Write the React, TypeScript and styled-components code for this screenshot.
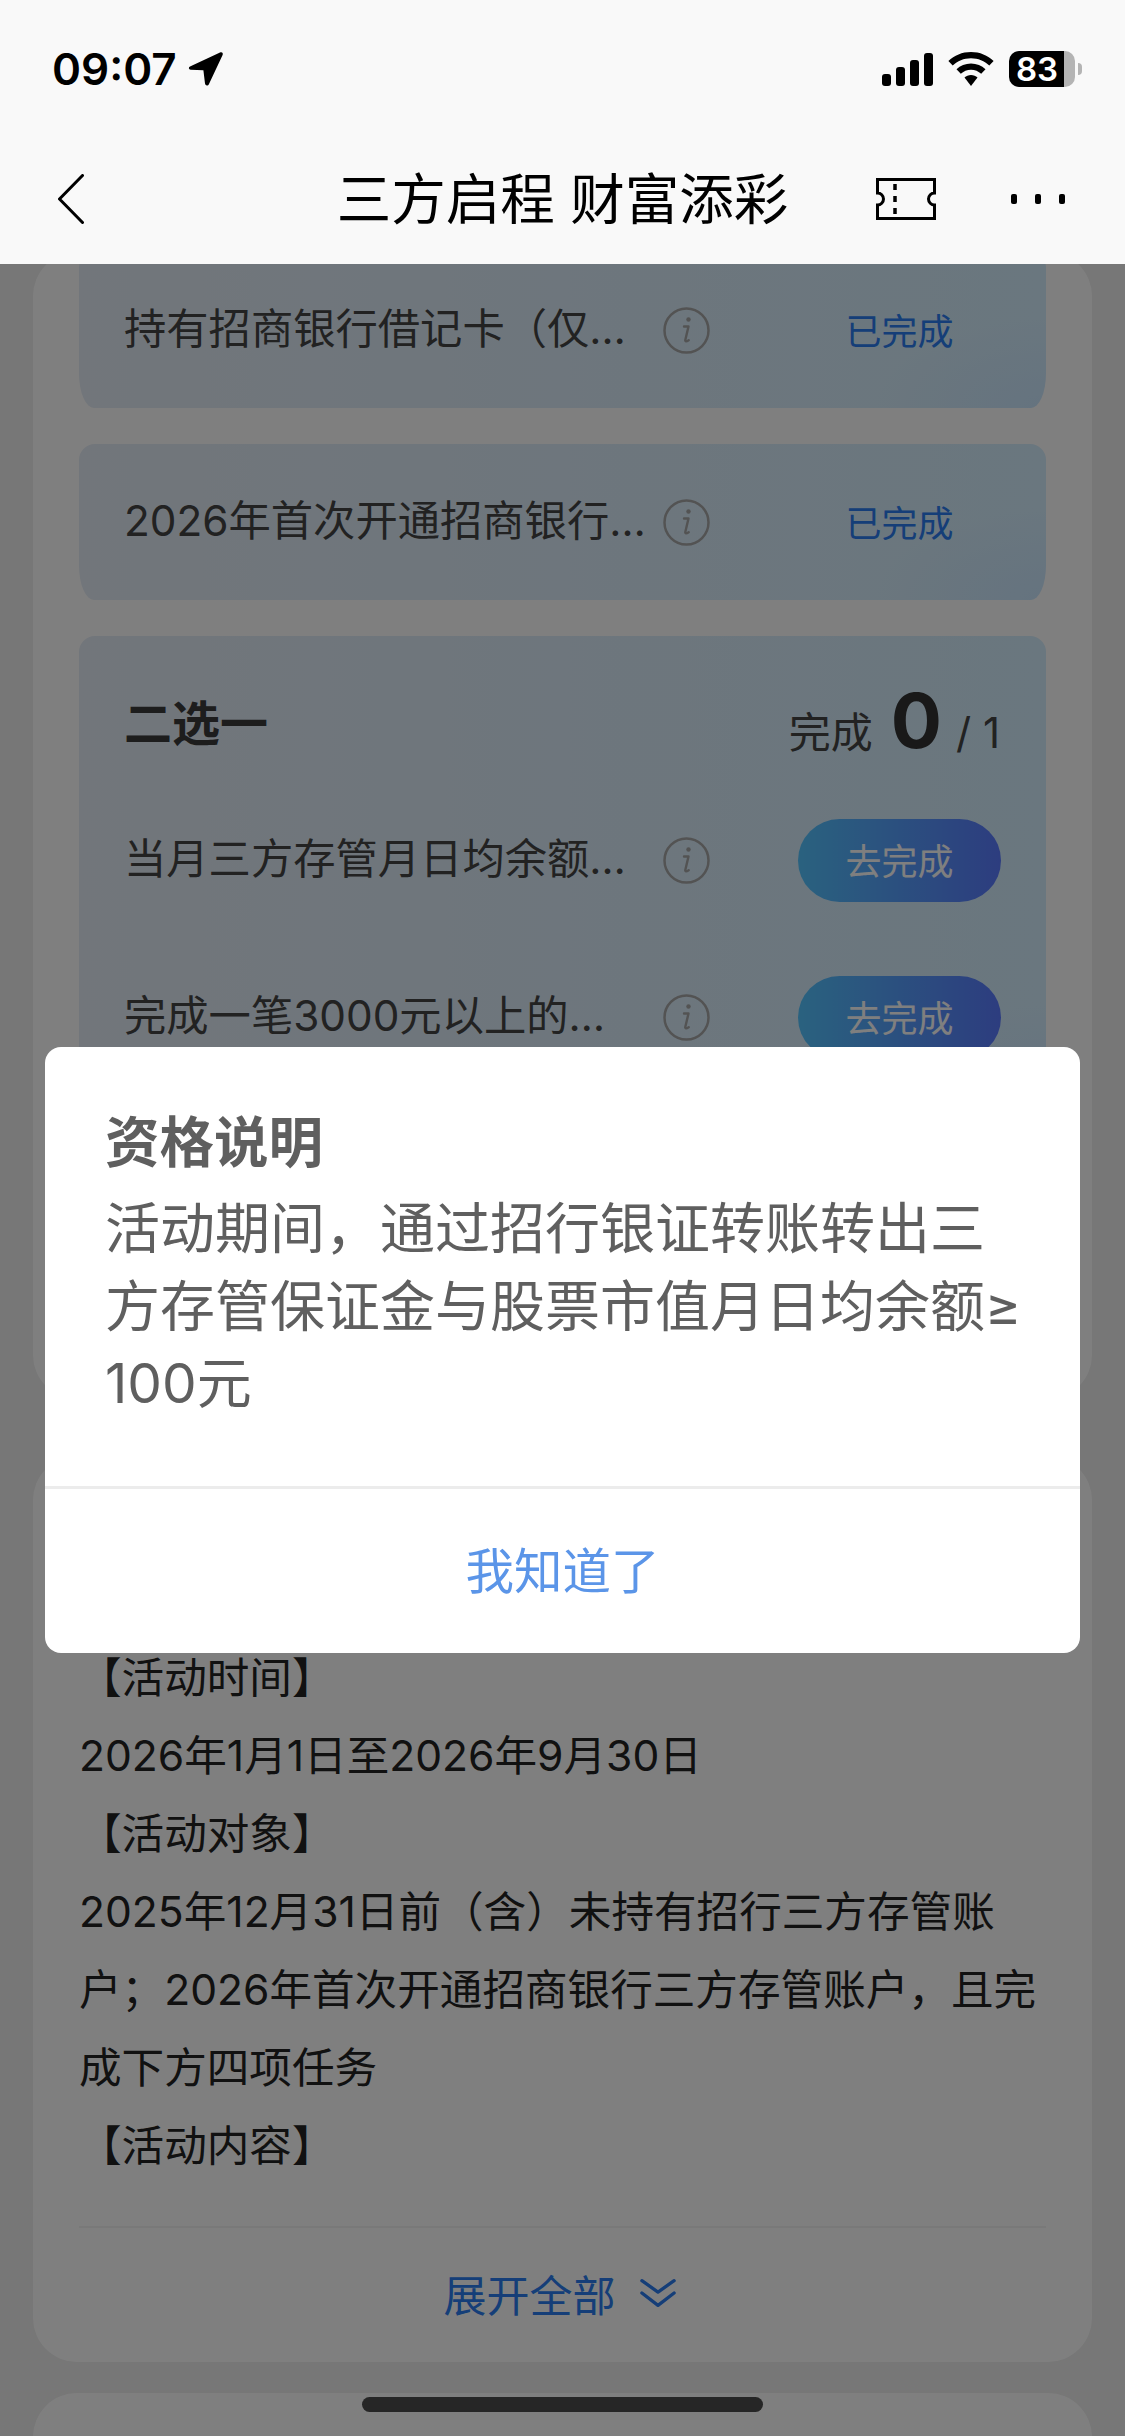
import React from "react";
import styled, { createGlobalStyle } from "styled-components";

const FONT = `"Inter", "Noto Sans CJK SC", "Noto Sans", sans-serif`;

const GlobalStyle = createGlobalStyle`
  html, body {
    margin: 0;
    padding: 0;
    background: #eeeeee;
    font-family: ${FONT};
  }
  * {
    box-sizing: border-box;
  }
`;

const Screen = styled.div`
  position: relative;
  width: 1125px;
  height: 2436px;
  overflow: hidden;
  display: flex;
  flex-direction: column;
  background: #eeeeee;
`;

const Header = styled.header`
  position: relative;
  z-index: 3;
  flex: none;
  height: 264px;
  background: #f9f9f9;
  display: flex;
  flex-direction: column;
`;

const StatusBar = styled.div`
  height: 134px;
  padding: 46px 50px 0 52px;
  display: flex;
  justify-content: space-between;
  align-items: flex-start;
`;

const Clock = styled.div`
  display: flex;
  align-items: center;
  gap: 11px;
  height: 46px;
  font-size: 44px;
  font-weight: 600;
  color: #000;
`;

const StatusIcons = styled.div`
  display: flex;
  align-items: center;
  height: 46px;
  gap: 15px;
`;

const Battery = styled.div`
  position: relative;
  width: 66px;
  height: 36px;
  border-radius: 10px;
  background: linear-gradient(90deg, #000 83%, #b4b4b4 83%);
  color: #fff;
  font-size: 33px;
  font-weight: 600;
  line-height: 36px;
  padding-left: 7px;
  &::after {
    content: "";
    position: absolute;
    right: -7px;
    top: 12px;
    width: 4px;
    height: 12px;
    border-radius: 0 6px 6px 0;
    background: #b4b4b4;
  }
`;

const NavBar = styled.nav`
  position: relative;
  flex: 1;
  display: flex;
  align-items: center;
  justify-content: space-between;
  padding: 0 60px 0 58px;
`;

const NavTitle = styled.h1`
  position: absolute;
  left: 0;
  right: 0;
  top: 31px;
  margin: 0;
  text-align: center;
  font-size: 54.5px;
  line-height: 68px;
  font-weight: 400;
  color: #000;
`;

const NavActions = styled.div`
  display: flex;
  align-items: center;
  gap: 75px;
`;

const Scroller = styled.main`
  flex: 1;
  overflow: hidden;
  padding: 0 33px;
  display: flex;
  flex-direction: column;
  gap: 31px;
`;

const Panel = styled.section<{ $top?: number; $height: number }>`
  flex: none;
  height: ${(p) => p.$height}px;
  margin-top: ${(p) => p.$top ?? 0}px;
  padding: 0 46px;
  background: #ffffff;
  border-radius: 44px;
  display: flex;
  flex-direction: column;
`;

const TaskCard = styled.div<{ $grow?: boolean }>`
  flex: none;
  height: ${(p) => (p.$grow ? "auto" : "156px")};
  margin-bottom: 36px;
  padding: 0 45px;
  border-radius: 16px 16px 15px 15px / 16px 16px 35px 35px;
  background:
    radial-gradient(170px 90px at 100% 100%, rgba(196, 226, 255, 0.6), rgba(196, 226, 255, 0) 100%),
    linear-gradient(90deg, #e4ecf6 0%, #d4eefe 100%);
  display: flex;
  flex-direction: column;
  justify-content: center;
`;

const GroupHead = styled.div`
  height: 146px;
  padding: 21px 1px 0 0;
  display: flex;
  justify-content: space-between;
  align-items: center;
`;

const GroupTitle = styled.div`
  font-size: 48px;
  font-weight: 700;
  color: #3a3a3a;
`;

const Progress = styled.div`
  display: flex;
  align-items: baseline;
  font-size: 42px;
  color: #444444;
`;

const ProgressValue = styled.span`
  font-size: 76px;
  font-weight: 700;
  color: #333333;
  margin: 0 14px 0 18px;
`;

const TaskRow = styled.div<{ $tall?: boolean }>`
  height: ${(p) => (p.$tall ? "157px" : "auto")};
  display: flex;
  align-items: center;
`;

const TaskName = styled.div`
  width: 516px;
  padding-bottom: 3px;
  font-size: 42.3px;
  line-height: 56px;
  white-space: nowrap;
  color: #444444;
`;

const InfoSlot = styled.div`
  width: 47px;
  height: 47px;
  margin-left: 23px;
  flex: none;
`;

const DoneLabel = styled.div`
  width: 203px;
  padding-bottom: 3px;
  text-align: center;
  margin-left: 88px;
  font-size: 36px;
  color: #2a7cf0;
`;

const GoButton = styled.div`
  width: 203px;
  height: 83px;
  padding-bottom: 3px;
  margin-left: 88px;
  border-radius: 42px;
  background: linear-gradient(90deg, #54c4ff 0%, #5a7aff 100%);
  color: #ffffff;
  font-size: 36px;
  display: flex;
  align-items: center;
  justify-content: center;
`;

const RulesBody = styled.div`
  padding-top: 183px;
  font-size: 42.6px;
  line-height: 78px;
  color: #222222;
`;

const RulesFooter = styled.div`
  margin-top: 41px;
  height: 136px;
  padding: 0 6px 5px 0;
  border-top: 2px solid #f3f3f3;
  display: flex;
  align-items: center;
  justify-content: center;
  gap: 24px;
  font-size: 43px;
  color: #2a7cf0;
`;

const Scrim = styled.div`
  position: absolute;
  inset: 0;
  z-index: 1;
  background: rgba(0, 0, 0, 0.5);
`;

const Dialog = styled.div`
  position: absolute;
  z-index: 2;
  left: 45px;
  top: 1047px;
  width: 1035px;
  height: 606px;
  border-radius: 16px;
  background: #ffffff;
  display: flex;
  flex-direction: column;
`;

const DialogContent = styled.div`
  flex: 1;
  padding: 56px 50px 0 60px;
  color: #5f5f5f;
`;

const DialogTitle = styled.div`
  font-size: 54.5px;
  line-height: 78px;
  font-weight: 700;
`;

const DialogText = styled.div`
  margin-top: 9px;
  font-size: 55px;
  line-height: 77.5px;
`;

const DialogButton = styled.div`
  height: 167px;
  padding-bottom: 6px;
  border-top: 3px solid #ececec;
  display: flex;
  align-items: center;
  justify-content: center;
  font-size: 48.5px;
  color: #5b95e8;
`;

const HomeBar = styled.div`
  position: absolute;
  z-index: 3;
  left: 362px;
  bottom: 24px;
  width: 401px;
  height: 15px;
  border-radius: 8px;
  background: #262626;
`;

const InfoIcon = () => (
  <svg width="47" height="47" viewBox="0 0 47 47" fill="none">
    <circle cx="23.5" cy="23.5" r="22" stroke="#a6a6a6" strokeWidth="2.5" />
    <circle cx="25.5" cy="12.5" r="2.2" fill="#a6a6a6" />
    <path d="M21 19.5h4.5l-3.2 13.5c-.3 1.4.8 1.8 3.4.2" stroke="#a6a6a6" strokeWidth="2.4" strokeLinecap="round" strokeLinejoin="round" />
  </svg>
);

const tasks = ["持有招商银行借记卡（仅…", "2026年首次开通招商银行…"];
const options = ["当月三方存管月日均余额…", "完成一笔3000元以上的…"];
const rules = [
  "【活动时间】",
  "2026年1月1日至2026年9月30日",
  "【活动对象】",
  "2025年12月31日前（含）未持有招行三方存管账户；2026年首次开通招商银行三方存管账户，且完成下方四项任务",
  "【活动内容】",
];

export default function App() {
  return (
    <>
      <GlobalStyle />
      <Screen>
        <Header>
          <StatusBar>
            <Clock>
              09:07
              <svg width="36" height="36" viewBox="0 0 36 36">
                <path d="M2 15.5 32 1.5c2-.9 3.4.6 2.6 2.5L21 33c-1 2.2-3.6 2-4-.4l-1.6-13.4L2.6 18.8c-2-.4-2.4-2.4-.6-3.3z" fill="#000" />
              </svg>
            </Clock>
            <StatusIcons>
              <svg width="51" height="33" viewBox="0 0 51 33" fill="#000">
                <rect x="0" y="21" width="9" height="12" rx="3" />
                <rect x="14" y="14" width="9" height="19" rx="3" />
                <rect x="28" y="7" width="9" height="26" rx="3" />
                <rect x="42" y="0" width="9" height="33" rx="3" />
              </svg>
              <svg width="46" height="34" viewBox="0 0 46 34" fill="#000">
                <path d="M23 0c8.800 0 16.700 3.400 22.600 9l-4.300 4.500C36.600 9 30.100 6.200 23 6.200S9.400 9 4.700 13.500L.4 9C6.300 3.400 14.200 0 23 0z" />
                <path d="M23 11.500c5.600 0 10.700 2.200 14.500 5.800l-4.300 4.500c-2.700-2.500-6.300-4.100-10.200-4.100s-7.500 1.600-10.200 4.100l-4.300-4.500c3.800-3.600 8.900-5.800 14.500-5.800z" />
                <path d="M23 23c2.500 0 4.800 1 6.500 2.600L23 34l-6.500-8.400C18.200 24 20.500 23 23 23z" />
              </svg>
              <Battery>83</Battery>
            </StatusIcons>
          </StatusBar>
          <NavBar>
            <svg width="26" height="50" viewBox="0 0 26 50" fill="none">
              <path d="M24.500 1.500 1.500 25l23 23.500" stroke="#000" strokeWidth="3" strokeLinecap="round" strokeLinejoin="round" />
            </svg>
            <NavTitle>三方启程 财富添彩</NavTitle>
            <NavActions>
              <svg width="60" height="42" viewBox="0 0 60 42" fill="none">
                <path d="M1.500 1.500h57v13.500a6 6 0 0 0 0 12v13.500h-57V27a6 6 0 0 0 0-12z" stroke="#000" strokeWidth="3" />
                <path d="M19 6v6M19 18v6M19 30v6" stroke="#000" strokeWidth="3.500" />
              </svg>
              <svg width="54" height="10" viewBox="0 0 54 10" fill="#000">
                <rect x="0" y="0" width="6" height="10" rx="2" />
                <rect x="24" y="0" width="6" height="10" rx="2" />
                <rect x="48" y="0" width="6" height="10" rx="2" />
              </svg>
            </NavActions>
          </NavBar>
        </Header>
        <Scroller>
          <Panel $top={-12} $height={1147}>
            {tasks.map((t) => (
              <TaskCard key={t}>
                <TaskRow>
                  <TaskName>{t}</TaskName>
                  <InfoSlot>
                    <InfoIcon />
                  </InfoSlot>
                  <DoneLabel>已完成</DoneLabel>
                </TaskRow>
              </TaskCard>
            ))}
            <TaskCard $grow>
              <GroupHead>
                <GroupTitle>二选一</GroupTitle>
                <Progress>
                  完成
                  <ProgressValue>0</ProgressValue>/ 1
                </Progress>
              </GroupHead>
              {options.map((t) => (
                <TaskRow key={t} $tall>
                  <TaskName>{t}</TaskName>
                  <InfoSlot>
                    <InfoIcon />
                  </InfoSlot>
                  <GoButton>去完成</GoButton>
                </TaskRow>
              ))}
            </TaskCard>
          </Panel>
          <Panel $top={26} $height={906}>
            <RulesBody>
              {rules.map((r) => (
                <div key={r}>{r}</div>
              ))}
            </RulesBody>
            <RulesFooter>
              展开全部
              <svg width="36" height="30" viewBox="0 0 38 30" fill="none">
                <path d="M2 2l17 12L36 2M2 15l17 13 17-13" stroke="#2a7cf0" strokeWidth="3.500" strokeLinecap="round" strokeLinejoin="round" />
              </svg>
            </RulesFooter>
          </Panel>
          <Panel $height={120} />
        </Scroller>
        <Scrim />
        <Dialog>
          <DialogContent>
            <DialogTitle>资格说明</DialogTitle>
            <DialogText>
              活动期间，通过招行银证转账转出三方存管保证金与股票市值月日均余额≥
              <wbr />
              100元
            </DialogText>
          </DialogContent>
          <DialogButton>我知道了</DialogButton>
        </Dialog>
        <HomeBar />
      </Screen>
    </>
  );
}
